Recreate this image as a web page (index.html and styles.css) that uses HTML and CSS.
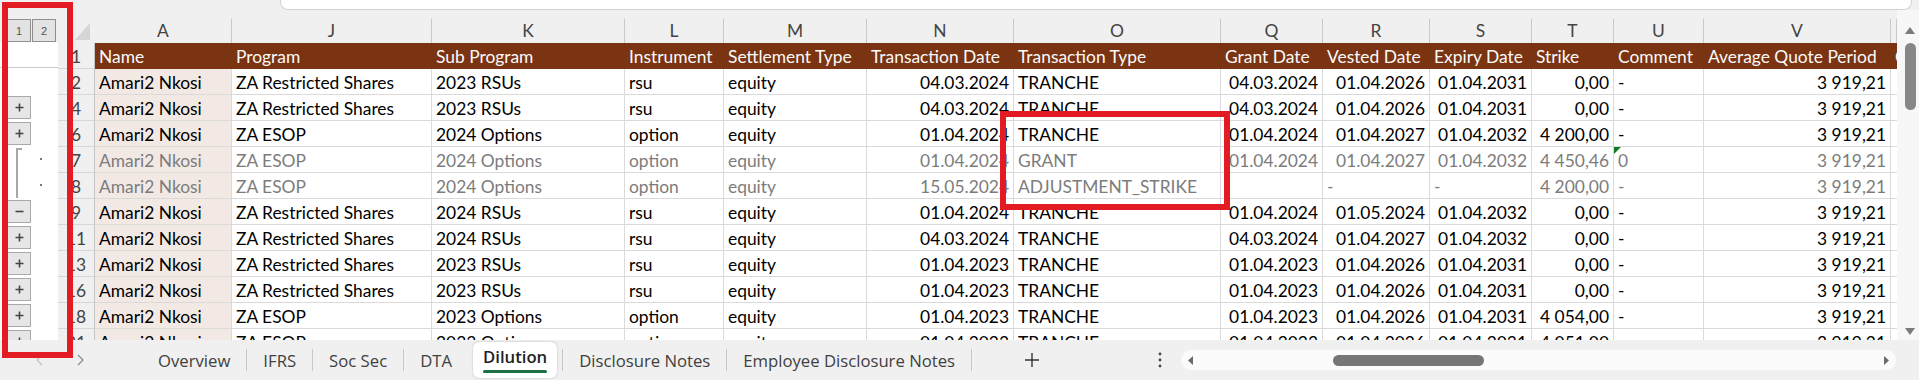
FILE: index.html
```html
<!DOCTYPE html>
<html lang="en">
<head>
<meta charset="utf-8">
<title>Dilution</title>
<link rel="stylesheet" href="styles.css">
</head>
<body>
<div class="app">
  <div class="topstrip"><div class="fbar"></div></div>
  <div class="sheet">
    <div class="outline">
      <div class="ol-top"><div class="lvl">1</div><div class="lvl">2</div></div>
      <div class="ol-body">
        <div class="ol-row ol-first"></div>
        <div class="ol-row"></div>
        <div class="ol-row"><span class="olbtn"><svg width="9" height="9" viewBox="0 0 9 9"><path d="M4.5 0.5v8M0.5 4.5h8" stroke="#444" stroke-width="1.6"/></svg></span></div>
        <div class="ol-row"><span class="olbtn"><svg width="9" height="9" viewBox="0 0 9 9"><path d="M4.5 0.5v8M0.5 4.5h8" stroke="#444" stroke-width="1.6"/></svg></span></div>
        <div class="ol-row grp"><span class="brk brk-top"></span><span class="dot"></span></div>
        <div class="ol-row grp"><span class="brk"></span><span class="dot"></span></div>
        <div class="ol-row"><span class="olbtn"><svg width="9" height="9" viewBox="0 0 9 9"><path d="M0.5 4.5h8" stroke="#444" stroke-width="1.6"/></svg></span></div>
        <div class="ol-row"><span class="olbtn"><svg width="9" height="9" viewBox="0 0 9 9"><path d="M4.5 0.5v8M0.5 4.5h8" stroke="#444" stroke-width="1.6"/></svg></span></div>
        <div class="ol-row"><span class="olbtn"><svg width="9" height="9" viewBox="0 0 9 9"><path d="M4.5 0.5v8M0.5 4.5h8" stroke="#444" stroke-width="1.6"/></svg></span></div>
        <div class="ol-row"><span class="olbtn"><svg width="9" height="9" viewBox="0 0 9 9"><path d="M4.5 0.5v8M0.5 4.5h8" stroke="#444" stroke-width="1.6"/></svg></span></div>
        <div class="ol-row"><span class="olbtn"><svg width="9" height="9" viewBox="0 0 9 9"><path d="M4.5 0.5v8M0.5 4.5h8" stroke="#444" stroke-width="1.6"/></svg></span></div>
        <div class="ol-row"><span class="olbtn"><svg width="9" height="9" viewBox="0 0 9 9"><path d="M4.5 0.5v8M0.5 4.5h8" stroke="#444" stroke-width="1.6"/></svg></span></div>
      </div>
    </div>

    <div class="grid">
      <div class="colhdr">
        <div class="corner"><svg width="15" height="17" viewBox="0 0 15 17"><path d="M15 0V17H0Z" fill="#d5d5d5"/></svg></div>
        <div>A</div><div>J</div><div>K</div><div>L</div><div>M</div><div>N</div><div>O</div><div>Q</div><div>R</div><div>S</div><div>T</div><div>U</div><div>V</div><div></div>
      </div>

      <div class="row hdr">
        <div class="c rh">1</div>
        <div class="c ca">Name</div><div class="c">Program</div><div class="c">Sub Program</div><div class="c">Instrument</div><div class="c">Settlement Type</div><div class="c">Transaction Date</div><div class="c">Transaction Type</div><div class="c">Grant Date</div><div class="c">Vested Date</div><div class="c">Expiry Date</div><div class="c">Strike</div><div class="c">Comment</div><div class="c">Average Quote Period</div><div class="c">C</div>
      </div>

      <div class="row">
        <div class="c rh">2</div>
        <div class="c ca">Amari2 Nkosi</div><div class="c">ZA Restricted Shares</div><div class="c">2023 RSUs</div><div class="c">rsu</div><div class="c">equity</div><div class="c r">04.03.2024</div><div class="c">TRANCHE</div><div class="c r">04.03.2024</div><div class="c r">01.04.2026</div><div class="c r">01.04.2031</div><div class="c r">0,00</div><div class="c">-</div><div class="c r">3&nbsp;919,21</div><div class="c"></div>
      </div>

      <div class="row">
        <div class="c rh">4</div>
        <div class="c ca">Amari2 Nkosi</div><div class="c">ZA Restricted Shares</div><div class="c">2023 RSUs</div><div class="c">rsu</div><div class="c">equity</div><div class="c r">04.03.2024</div><div class="c">TRANCHE</div><div class="c r">04.03.2024</div><div class="c r">01.04.2026</div><div class="c r">01.04.2031</div><div class="c r">0,00</div><div class="c">-</div><div class="c r">3&nbsp;919,21</div><div class="c"></div>
      </div>

      <div class="row">
        <div class="c rh">6</div>
        <div class="c ca">Amari2 Nkosi</div><div class="c">ZA ESOP</div><div class="c">2024 Options</div><div class="c">option</div><div class="c">equity</div><div class="c r">01.04.2024</div><div class="c">TRANCHE</div><div class="c r">01.04.2024</div><div class="c r">01.04.2027</div><div class="c r">01.04.2032</div><div class="c r">4&nbsp;200,00</div><div class="c">-</div><div class="c r">3&nbsp;919,21</div><div class="c"></div>
      </div>

      <div class="row g">
        <div class="c rh">7</div>
        <div class="c ca">Amari2 Nkosi</div><div class="c">ZA ESOP</div><div class="c">2024 Options</div><div class="c">option</div><div class="c">equity</div><div class="c r">01.04.2024</div><div class="c">GRANT</div><div class="c r">01.04.2024</div><div class="c r">01.04.2027</div><div class="c r">01.04.2032</div><div class="c r">4&nbsp;450,46</div><div class="c flag">0</div><div class="c r">3&nbsp;919,21</div><div class="c"></div>
      </div>

      <div class="row g">
        <div class="c rh">8</div>
        <div class="c ca">Amari2 Nkosi</div><div class="c">ZA ESOP</div><div class="c">2024 Options</div><div class="c">option</div><div class="c">equity</div><div class="c r">15.05.2024</div><div class="c">ADJUSTMENT_STRIKE</div><div class="c"></div><div class="c">-</div><div class="c">-</div><div class="c r">4&nbsp;200,00</div><div class="c">-</div><div class="c r">3&nbsp;919,21</div><div class="c"></div>
      </div>

      <div class="row">
        <div class="c rh">9</div>
        <div class="c ca">Amari2 Nkosi</div><div class="c">ZA Restricted Shares</div><div class="c">2024 RSUs</div><div class="c">rsu</div><div class="c">equity</div><div class="c r">01.04.2024</div><div class="c">TRANCHE</div><div class="c r">01.04.2024</div><div class="c r">01.05.2024</div><div class="c r">01.04.2032</div><div class="c r">0,00</div><div class="c">-</div><div class="c r">3&nbsp;919,21</div><div class="c"></div>
      </div>

      <div class="row">
        <div class="c rh">11</div>
        <div class="c ca">Amari2 Nkosi</div><div class="c">ZA Restricted Shares</div><div class="c">2024 RSUs</div><div class="c">rsu</div><div class="c">equity</div><div class="c r">04.03.2024</div><div class="c">TRANCHE</div><div class="c r">04.03.2024</div><div class="c r">01.04.2027</div><div class="c r">01.04.2032</div><div class="c r">0,00</div><div class="c">-</div><div class="c r">3&nbsp;919,21</div><div class="c"></div>
      </div>

      <div class="row">
        <div class="c rh">13</div>
        <div class="c ca">Amari2 Nkosi</div><div class="c">ZA Restricted Shares</div><div class="c">2023 RSUs</div><div class="c">rsu</div><div class="c">equity</div><div class="c r">01.04.2023</div><div class="c">TRANCHE</div><div class="c r">01.04.2023</div><div class="c r">01.04.2026</div><div class="c r">01.04.2031</div><div class="c r">0,00</div><div class="c">-</div><div class="c r">3&nbsp;919,21</div><div class="c"></div>
      </div>

      <div class="row">
        <div class="c rh">16</div>
        <div class="c ca">Amari2 Nkosi</div><div class="c">ZA Restricted Shares</div><div class="c">2023 RSUs</div><div class="c">rsu</div><div class="c">equity</div><div class="c r">01.04.2023</div><div class="c">TRANCHE</div><div class="c r">01.04.2023</div><div class="c r">01.04.2026</div><div class="c r">01.04.2031</div><div class="c r">0,00</div><div class="c">-</div><div class="c r">3&nbsp;919,21</div><div class="c"></div>
      </div>

      <div class="row">
        <div class="c rh">18</div>
        <div class="c ca">Amari2 Nkosi</div><div class="c">ZA ESOP</div><div class="c">2023 Options</div><div class="c">option</div><div class="c">equity</div><div class="c r">01.04.2023</div><div class="c">TRANCHE</div><div class="c r">01.04.2023</div><div class="c r">01.04.2026</div><div class="c r">01.04.2031</div><div class="c r">4&nbsp;054,00</div><div class="c">-</div><div class="c r">3&nbsp;919,21</div><div class="c"></div>
      </div>

      <div class="row">
        <div class="c rh">21</div>
        <div class="c ca">Amari2 Nkosi</div><div class="c">ZA ESOP</div><div class="c">2023 Options</div><div class="c">option</div><div class="c">equity</div><div class="c r">01.04.2023</div><div class="c">TRANCHE</div><div class="c r">01.04.2023</div><div class="c r">01.04.2026</div><div class="c r">01.04.2031</div><div class="c r">4&nbsp;051,00</div><div class="c">-</div><div class="c r">3&nbsp;919,21</div><div class="c"></div>
      </div>
    </div>

    <div class="vscroll">
      <svg class="varrow" width="10" height="7" viewBox="0 0 10 7"><path d="M0 7H10L5 0Z" fill="#7a7a7a"/></svg>
      <div class="vthumb"></div>
      <svg class="varrow down" width="10" height="7" viewBox="0 0 10 7"><path d="M0 0H10L5 7Z" fill="#7a7a7a"/></svg>
    </div>
  </div>

  <div class="tabbar">
    <div class="tabstrip">
      <div class="nav">
        <svg class="nav-prev" width="7" height="12" viewBox="0 0 7 12"><path d="M6 1L1 6l5 5" fill="none" stroke="#c2c2c2" stroke-width="1.3"/></svg>
        <svg class="nav-next" width="7" height="12" viewBox="0 0 7 12"><path d="M1 1l5 5-5 5" fill="none" stroke="#8c8c8c" stroke-width="1.3"/></svg>
      </div>
      <div class="tab">Overview</div><span class="sep"></span>
      <div class="tab">IFRS</div><span class="sep"></span>
      <div class="tab">Soc Sec</div><span class="sep"></span>
      <div class="tab">DTA</div>
      <div class="tab active">Dilution</div><span class="sep"></span>
      <div class="tab">Disclosure Notes</div><span class="sep"></span>
      <div class="tab">Employee Disclosure Notes</div><span class="sep"></span>
    </div>
    <div class="addsheet"><svg width="14" height="14" viewBox="0 0 14 14"><path d="M7 0v14M0 7h14" stroke="#333" stroke-width="1.4"/></svg></div>
    <div class="more"><svg width="4" height="16" viewBox="0 0 4 16"><circle cx="2" cy="2" r="1.4" fill="#444"/><circle cx="2" cy="8" r="1.4" fill="#444"/><circle cx="2" cy="14" r="1.4" fill="#444"/></svg></div>
    <div class="hscroll">
      <svg width="5" height="9" viewBox="0 0 5 9"><path d="M5 0V9L0 4.5Z" fill="#6b6b6b"/></svg>
      <div class="hthumb"></div>
      <svg class="hright" width="5" height="9" viewBox="0 0 5 9"><path d="M0 0V9L5 4.5Z" fill="#6b6b6b"/></svg>
    </div>
  </div>
</div>
<div class="anno anno-outline"></div>
<div class="anno anno-type"></div>
</body>
</html>
```

FILE: styles.css
```css
* { box-sizing: border-box; margin: 0; padding: 0; }

body {
  margin: 0;
  width: 1919px;
  height: 380px;
  overflow: hidden;
  background: #f0f0f0;
  font-family: Lato, "Liberation Sans", sans-serif;
  position: relative;
}

.app { width: 1919px; height: 380px; display: flex; flex-direction: column; }

/* formula bar edge */
.topstrip { height: 10px; padding: 0 7px 0 280px; flex: none; }
.fbar {
  height: 10px;
  background: #fff;
  border: 1px solid #d3d3d3;
  border-top: none;
  border-radius: 0 0 8px 8px;
}

/* sheet area */
.sheet { display: flex; height: 330px; flex: none; }

.outline { width: 58px; flex: none; display: flex; flex-direction: column; }
.ol-top { height: 33px; display: flex; gap: 1px; padding: 9px 0 0 7px; background: #f0f0f0; }
.lvl {
  width: 24px; height: 23px;
  background: #e3e3e3;
  border: 1px solid #8f8f8f;
  display: flex; align-items: center; justify-content: center;
  font: 11px "Liberation Sans", sans-serif;
  color: #555;
}
.ol-body { flex: 1; background: #fff; }
.ol-row { height: 26px; display: flex; align-items: center; padding-left: 7px; }
.ol-first { border-bottom: 1px solid #cbcbcb; }
.olbtn {
  width: 24px; height: 23px;
  background: #e6e6e6;
  border: 1px solid #a9a9a9;
  display: flex; align-items: center; justify-content: center;
}
.ol-row.grp { align-items: stretch; padding-left: 16px; }
.brk { width: 6px; border-left: 2px solid #a8a8a8; }
.brk-top { margin-top: 2px; border-top: 2px solid #a8a8a8; }
.dot { width: 2px; height: 2px; background: #7a7a7a; margin-left: 18px; align-self: center; }

/* grid */
.grid {
  --cols: 37px 137px 200px 193px 99px 143px 147px 207px 102px 107px 102px 82px 90px 187px 6px;
  width: 1839px;
  flex: none;
  height: 330px;
  overflow: hidden;
  background: #fff;
  font-size: 17.4px;
}
.colhdr {
  display: grid;
  grid-template-columns: var(--cols);
  height: 33px;
  padding-top: 9px;
  background: #f0f0f0;
}
.colhdr > div {
  border-right: 1px solid #c9c9c9;
  text-align: center;
  line-height: 24px;
  color: #444;
  overflow: hidden;
}
.colhdr .corner {
  display: flex; justify-content: flex-end; align-items: flex-end;
  padding: 0 5px 3px 0;
  border-right: none;
}

.row { display: grid; grid-template-columns: var(--cols); height: 26px; }
.c {
  height: 26px;
  border-right: 1px solid #dadada;
  border-bottom: 1px solid #dadada;
  padding: 1px 4px 0;
  line-height: 25px;
  white-space: nowrap;
  overflow: hidden;
  color: #000;
}
.r { text-align: right; }
.ca { background: #f2e9e5; }
.rh {
  background: #f0f0f0;
  color: #444;
  text-align: center;
  padding: 1px 0 0;
  border-right: 1px solid #c4c4c4;
  border-bottom: 1px solid #d7d7d7;
}
.hdr .c:not(.rh) { background: #7a3412; color: #fafafa; border-color: #7a3412; }
.hdr .ca { border-right-color: #9a6a55; }
.g .c:not(.rh) { color: #7c7c7c; }
.flag { position: relative; }
.flag::before {
  content: "";
  position: absolute;
  left: 0; top: 0;
  border-top: 7px solid #127c22;
  border-right: 7px solid transparent;
}

/* vertical scrollbar */
.vscroll {
  width: 22px;
  flex: none;
  background: #f7f7f7;
  display: flex; flex-direction: column; align-items: flex-start;
  padding: 17px 0 5px 8px;
}
.vthumb { width: 11px; height: 67px; margin-top: 9px; background: #878787; border-radius: 6px; }
.varrow.down { margin-top: auto; }

/* sheet tabs */
.tabbar { height: 40px; flex: none; display: flex; align-items: center; background: #f0f0f0; }
.tabstrip { width: 1000px; flex: none; display: flex; align-items: center; height: 40px; }
.nav { width: 142px; flex: none; display: flex; align-items: center; }
.nav-prev { margin-left: 36px; }
.nav-next { margin-left: 34px; }
.tab {
  align-self: flex-end;
  height: 38px;
  line-height: 38px;
  padding: 0 16px;
  font-family: "Open Sans", "Noto Sans", sans-serif;
  font-size: 16.7px;
  color: #404040;
  white-space: nowrap;
}
.tab.active {
  align-self: flex-start;
  margin: 2px 5px 0;
  height: 36px;
  line-height: 30px;
  padding: 0 10px;
  background: #fff;
  border-radius: 6px;
  box-shadow: 0 0 2px rgba(0, 0, 0, 0.28);
  font-weight: 600;
  color: #222;
}
.tab.active::after {
  content: "";
  display: block;
  height: 3px;
  margin-top: -2px;
  background: #1e7145;
  border-radius: 2px;
}
.sep { width: 1px; height: 22px; background: #c8c8c8; flex: none; }

.addsheet { width: 20px; margin-left: 22px; display: flex; justify-content: center; }
.more { width: 20px; margin-left: 108px; display: flex; justify-content: center; }
.hscroll {
  width: 715px;
  height: 20px;
  margin-left: 11px;
  background: #fbfbfb;
  border-radius: 10px;
  display: flex; align-items: center;
  padding: 0 7px;
}
.hthumb { width: 151px; height: 11px; margin-left: 140px; background: #767676; border-radius: 6px; }
.hright { margin-left: auto; }

/* red annotation frames */
.anno { position: absolute; border: 6px solid #e31b23; }
.anno-outline { left: 2px; top: 2px; width: 71px; height: 356px; }
.anno-type { left: 1000px; top: 111px; width: 230px; height: 99px; }
```
